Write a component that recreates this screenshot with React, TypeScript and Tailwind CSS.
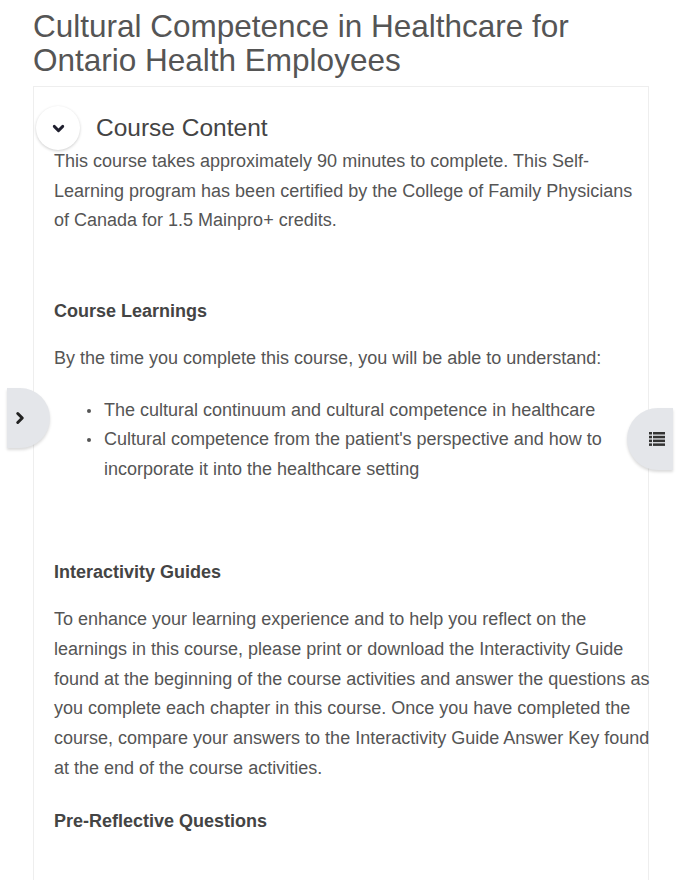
import { ChevronDown, ChevronRight } from 'lucide-react';

function ListIcon() {
  return (
    <svg width="16" height="14" viewBox="0 0 16 14" className="text-[#333]">
      <rect x="0" y="0" width="3" height="2.5" fill="currentColor" />
      <rect x="4" y="0" width="12" height="2.5" fill="currentColor" />
      <rect x="0" y="3.8" width="3" height="2.5" fill="currentColor" />
      <rect x="4" y="3.8" width="12" height="2.5" fill="currentColor" />
      <rect x="0" y="7.6" width="3" height="2.5" fill="currentColor" />
      <rect x="4" y="7.6" width="12" height="2.5" fill="currentColor" />
      <rect x="0" y="11.4" width="3" height="2.5" fill="currentColor" />
      <rect x="4" y="11.4" width="12" height="2.5" fill="currentColor" />
    </svg>
  );
}

const bullets = [
  'The cultural continuum and cultural competence in healthcare',
  "Cultural competence from the patient's perspective and how to incorporate it into the healthcare setting",
];

export default function App() {
  return (
    <div className="relative h-[880px] overflow-hidden bg-white font-['Liberation_Sans',Arial,sans-serif] text-[#555]">
      <h1 className="pl-[33px] pt-[9px] text-[31.5px] leading-[34px] text-[#555]">
        Cultural Competence in Healthcare for
        <br />
        Ontario Health Employees
      </h1>

      <div className="ml-[33px] mr-[31px] mt-[9px] border border-[#eee] pb-24">
        <div className="flex items-center gap-[16px] pl-[2px] pt-[19px]">
          <button className="flex h-[44px] w-[44px] items-center justify-center rounded-full bg-white shadow-[0_1px_3px_rgba(0,0,0,0.2)]">
            <ChevronDown className="h-[17px] w-[17px] text-[#1f1f2e]" strokeWidth={4} />
          </button>
          <span className="text-[24.5px] text-[#444]">Course Content</span>
        </div>

        <div className="mt-[-3px] w-[617px] pl-[20px] text-[18px] leading-[29.7px]">
          <p>
            This course takes approximately 90 minutes to complete. This Self-Learning program has been
            certified by the College of Family Physicians of Canada for 1.5 Mainpro+ credits.
          </p>
          <p className="mt-[61px] font-bold text-[#444]">Course Learnings</p>
          <p className="mt-[17px]">By the time you complete this course, you will be able to understand:</p>
          <ul className="mt-[22px] pl-[50px] pr-[30px]">
            {bullets.map((b) => (
              <li key={b} className="relative">
                <span className="absolute left-[-17px] top-[13px] h-[4px] w-[4px] rounded-full bg-[#555]" />
                {b}
              </li>
            ))}
          </ul>
          <p className="mt-[73px] font-bold text-[#444]">Interactivity Guides</p>
          <p className="mt-[18px]">
            To enhance your learning experience and to help you reflect on the learnings in this course,
            please print or download the Interactivity Guide found at the beginning of the course activities
            and answer the questions as you complete each chapter in this course. Once you have completed the
            course, compare your answers to the Interactivity Guide Answer Key found at the end of the course
            activities.
          </p>
          <p className="mt-[23px] font-bold text-[#444]">Pre-Reflective Questions</p>
        </div>
      </div>

      <button className="absolute left-[7px] top-[388px] flex h-[60px] w-[43px] items-center justify-start rounded-r-[30px] bg-[#e4e6ea] pl-[4px] shadow-[0_2px_3px_rgba(0,0,0,0.15)]">
        <ChevronRight className="h-[18px] w-[18px] text-[#222]" strokeWidth={4} />
      </button>

      <button className="absolute left-[627px] top-[408px] flex h-[62px] w-[46px] items-center justify-start rounded-l-[31px] bg-[#e4e6ea] pl-[22px] shadow-[0_2px_3px_rgba(0,0,0,0.15)]">
        <ListIcon />
      </button>
    </div>
  );
}
